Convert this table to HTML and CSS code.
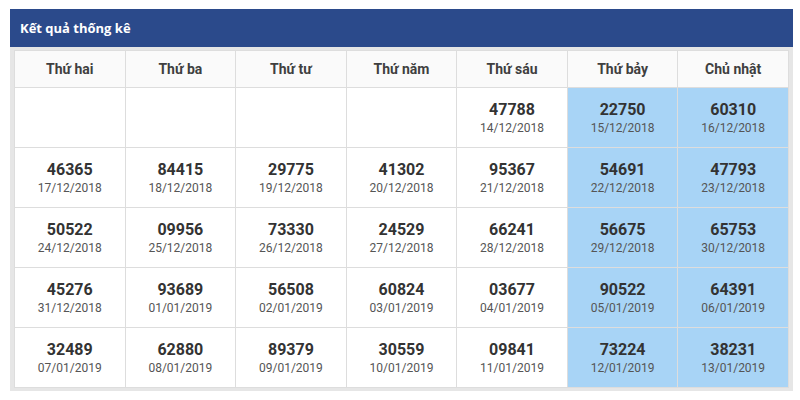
FILE: index.html
```html
<!DOCTYPE html>
<html lang="vi">
<head>
<meta charset="utf-8">
<title>Kết quả thống kê</title>
<link rel="stylesheet" href="styles.css">
</head>
<body>
<div class="panel">
  <div class="panel-title">Kết quả thống kê</div>
  <div class="panel-body">
    <table class="stats">
      <thead>
        <tr>
          <th>Thứ hai</th><th>Thứ ba</th><th>Thứ tư</th><th>Thứ năm</th><th>Thứ sáu</th><th>Thứ bảy</th><th>Chủ nhật</th>
        </tr>
      </thead>
      <tbody>
        <tr>
          <td></td><td></td><td></td><td></td>
          <td><b>47788</b><span>14/12/2018</span></td>
          <td class="we"><b>22750</b><span>15/12/2018</span></td>
          <td class="we"><b>60310</b><span>16/12/2018</span></td>
        </tr>
        <tr>
          <td><b>46365</b><span>17/12/2018</span></td>
          <td><b>84415</b><span>18/12/2018</span></td>
          <td><b>29775</b><span>19/12/2018</span></td>
          <td><b>41302</b><span>20/12/2018</span></td>
          <td><b>95367</b><span>21/12/2018</span></td>
          <td class="we"><b>54691</b><span>22/12/2018</span></td>
          <td class="we"><b>47793</b><span>23/12/2018</span></td>
        </tr>
        <tr>
          <td><b>50522</b><span>24/12/2018</span></td>
          <td><b>09956</b><span>25/12/2018</span></td>
          <td><b>73330</b><span>26/12/2018</span></td>
          <td><b>24529</b><span>27/12/2018</span></td>
          <td><b>66241</b><span>28/12/2018</span></td>
          <td class="we"><b>56675</b><span>29/12/2018</span></td>
          <td class="we"><b>65753</b><span>30/12/2018</span></td>
        </tr>
        <tr>
          <td><b>45276</b><span>31/12/2018</span></td>
          <td><b>93689</b><span>01/01/2019</span></td>
          <td><b>56508</b><span>02/01/2019</span></td>
          <td><b>60824</b><span>03/01/2019</span></td>
          <td><b>03677</b><span>04/01/2019</span></td>
          <td class="we"><b>90522</b><span>05/01/2019</span></td>
          <td class="we"><b>64391</b><span>06/01/2019</span></td>
        </tr>
        <tr>
          <td><b>32489</b><span>07/01/2019</span></td>
          <td><b>62880</b><span>08/01/2019</span></td>
          <td><b>89379</b><span>09/01/2019</span></td>
          <td><b>30559</b><span>10/01/2019</span></td>
          <td><b>09841</b><span>11/01/2019</span></td>
          <td class="we"><b>73224</b><span>12/01/2019</span></td>
          <td class="we"><b>38231</b><span>13/01/2019</span></td>
        </tr>
      </tbody>
    </table>
  </div>
</div>
</body>
</html>
```

FILE: styles.css
```css
html, body {
  margin: 0;
  padding: 0;
  background: #fff;
}

.panel {
  margin: 9px 0 0 10px;
  width: 783px;
}

.panel-title {
  background: #2b4a8b;
  color: #fff;
  height: 38px;
  padding-left: 10px;
  display: flex;
  align-items: center;
  font: bold 13px "Open Sans", sans-serif;
}

.panel-body {
  background: #e6e6e6;
  padding: 3px 4px 3px 4px;
}

.stats {
  width: 100%;
  border-collapse: collapse;
  table-layout: fixed;
  font-family: Roboto, "Open Sans", sans-serif;
  background: #fff;
}

.stats th,
.stats td {
  border: 1px solid #ddd;
  text-align: center;
  padding: 0;
}

.stats th {
  height: 36px;
  background: #fafafa;
  color: #3f3f3f;
  font-size: 14px;
  font-weight: bold;
}

.stats td {
  height: 59px;
  vertical-align: middle;
}

.stats td b {
  display: block;
  font-size: 16px;
  line-height: 21px;
  font-weight: bold;
  color: #333;
}

.stats td span {
  display: block;
  font-size: 12px;
  line-height: 17px;
  color: #555;
}

.stats td.we {
  background: #a8d4f6;
}
```
